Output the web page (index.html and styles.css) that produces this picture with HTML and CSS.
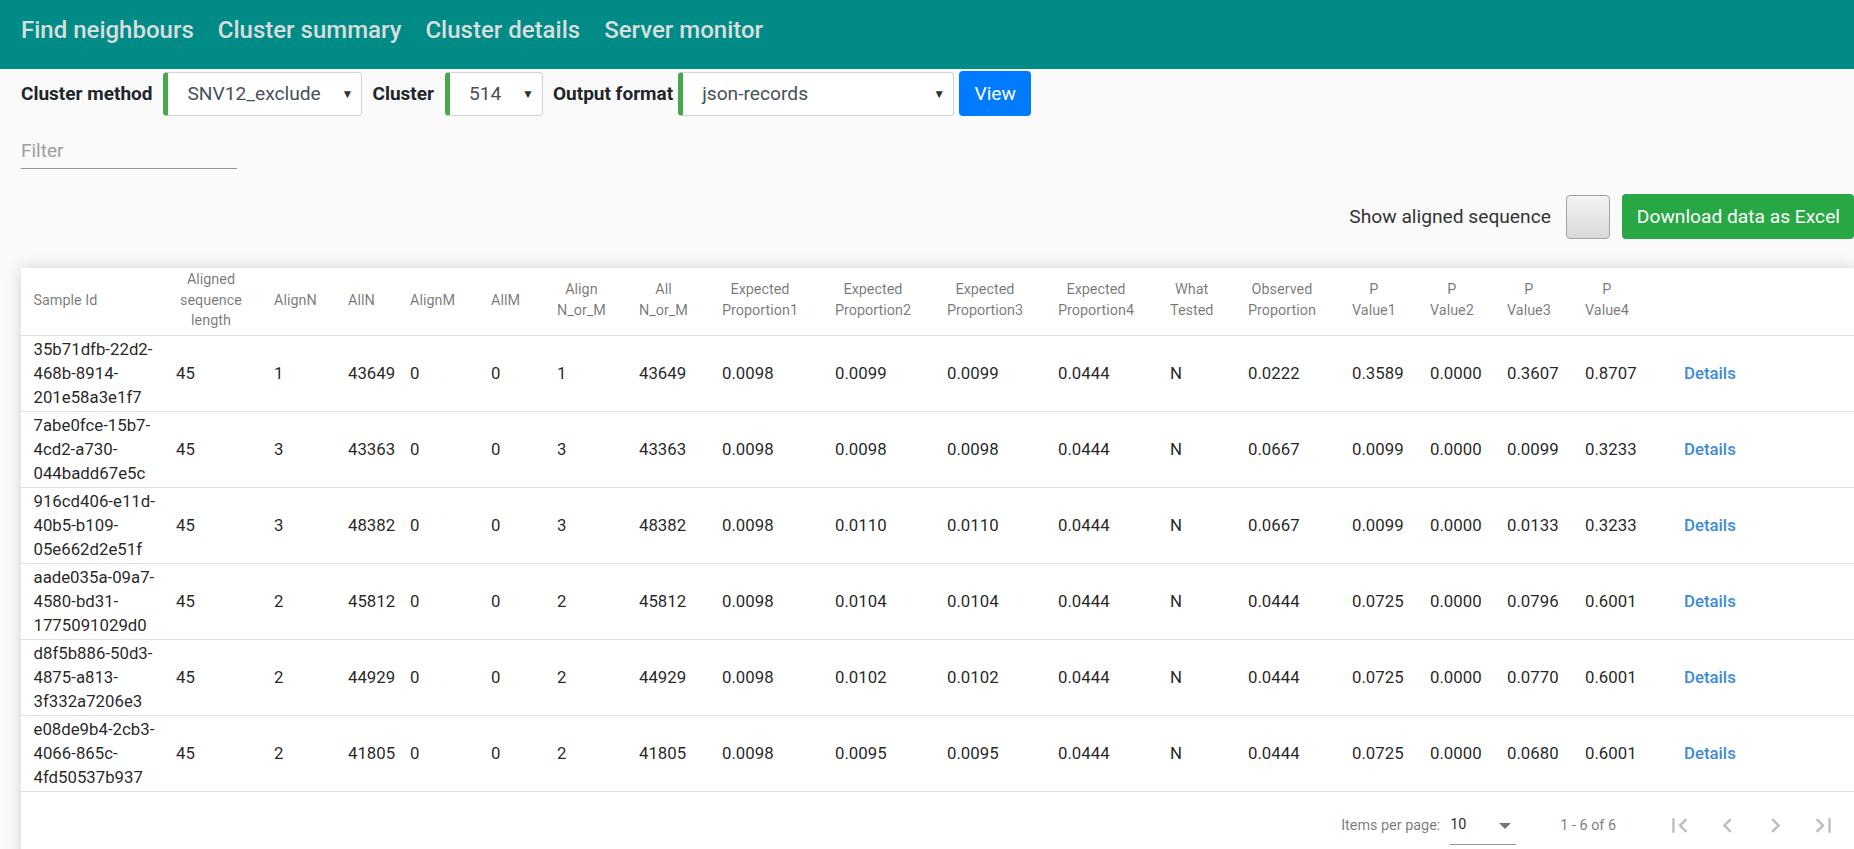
FILE: index.html
```html
<!DOCTYPE html>
<html lang="en">
<head>
<meta charset="utf-8">
<title>Cluster details</title>
<link rel="stylesheet" href="styles.css">
</head>
<body>
<header class="topnav">
  <a href="#">Find neighbours</a>
  <a href="#">Cluster summary</a>
  <a href="#">Cluster details</a>
  <a href="#">Server monitor</a>
</header>
<main class="content">
  <div class="controls">
    <span class="lbl">Cluster method</span>
    <div class="sel sel-method"><span>SNV12_exclude</span><span class="caret">&#9660;</span></div>
    <span class="lbl">Cluster</span>
    <div class="sel sel-cluster"><span>514</span><span class="caret">&#9660;</span></div>
    <span class="lbl lbl-tight">Output format</span>
    <div class="sel sel-format"><span>json-records</span><span class="caret">&#9660;</span></div>
    <button class="btn-view">View</button>
  </div>
  <div class="filter"><input class="filter-input" type="text" placeholder="Filter"></div>
  <div class="tools">
    <span class="tools-label">Show aligned sequence</span>
    <span class="check"></span>
    <button class="btn-excel">Download data as Excel</button>
  </div>
  <section class="card">
    <table class="grid">
      <colgroup>
        <col class="c-id"><col class="c-len"><col class="c-an"><col class="c-alln"><col class="c-am"><col class="c-allm">
        <col class="c-anm"><col class="c-allnm"><col class="c-ep1"><col class="c-ep2"><col class="c-ep3"><col class="c-ep4">
        <col class="c-wt"><col class="c-op"><col class="c-p1"><col class="c-p2"><col class="c-p3"><col class="c-p4"><col>
      </colgroup>
      <thead>
        <tr>
          <th class="first">Sample Id</th>
          <th><div class="hd hd-len">Aligned sequence length</div></th>
          <th><div class="hd">AlignN</div></th>
          <th><div class="hd">AllN</div></th>
          <th><div class="hd">AlignM</div></th>
          <th><div class="hd">AllM</div></th>
          <th><div class="hd">Align N_or_M</div></th>
          <th><div class="hd">All N_or_M</div></th>
          <th><div class="hd">Expected Proportion1</div></th>
          <th><div class="hd">Expected Proportion2</div></th>
          <th><div class="hd">Expected Proportion3</div></th>
          <th><div class="hd">Expected Proportion4</div></th>
          <th><div class="hd">What Tested</div></th>
          <th><div class="hd">Observed Proportion</div></th>
          <th><div class="hd">P Value1</div></th>
          <th><div class="hd">P Value2</div></th>
          <th><div class="hd">P Value3</div></th>
          <th><div class="hd">P Value4</div></th>
          <th></th>
        </tr>
      </thead>
      <tbody>
        <tr>
          <td class="first">35b71dfb-<wbr>22d2-<wbr>468b-<wbr>8914-<wbr>201e58a3e1f7</td>
          <td>45</td><td>1</td><td>43649</td><td>0</td><td>0</td><td>1</td><td>43649</td>
          <td>0.0098</td><td>0.0099</td><td>0.0099</td><td>0.0444</td><td>N</td><td>0.0222</td>
          <td>0.3589</td><td>0.0000</td><td>0.3607</td><td>0.8707</td>
          <td><a class="details" href="#">Details</a></td>
        </tr>
        <tr>
          <td class="first">7abe0fce-<wbr>15b7-<wbr>4cd2-<wbr>a730-<wbr>044badd67e5c</td>
          <td>45</td><td>3</td><td>43363</td><td>0</td><td>0</td><td>3</td><td>43363</td>
          <td>0.0098</td><td>0.0098</td><td>0.0098</td><td>0.0444</td><td>N</td><td>0.0667</td>
          <td>0.0099</td><td>0.0000</td><td>0.0099</td><td>0.3233</td>
          <td><a class="details" href="#">Details</a></td>
        </tr>
        <tr>
          <td class="first">916cd406-<wbr>e11d-<wbr>40b5-<wbr>b109-<wbr>05e662d2e51f</td>
          <td>45</td><td>3</td><td>48382</td><td>0</td><td>0</td><td>3</td><td>48382</td>
          <td>0.0098</td><td>0.0110</td><td>0.0110</td><td>0.0444</td><td>N</td><td>0.0667</td>
          <td>0.0099</td><td>0.0000</td><td>0.0133</td><td>0.3233</td>
          <td><a class="details" href="#">Details</a></td>
        </tr>
        <tr>
          <td class="first">aade035a-<wbr>09a7-<wbr>4580-<wbr>bd31-<wbr>1775091029d0</td>
          <td>45</td><td>2</td><td>45812</td><td>0</td><td>0</td><td>2</td><td>45812</td>
          <td>0.0098</td><td>0.0104</td><td>0.0104</td><td>0.0444</td><td>N</td><td>0.0444</td>
          <td>0.0725</td><td>0.0000</td><td>0.0796</td><td>0.6001</td>
          <td><a class="details" href="#">Details</a></td>
        </tr>
        <tr>
          <td class="first">d8f5b886-<wbr>50d3-<wbr>4875-<wbr>a813-<wbr>3f332a7206e3</td>
          <td>45</td><td>2</td><td>44929</td><td>0</td><td>0</td><td>2</td><td>44929</td>
          <td>0.0098</td><td>0.0102</td><td>0.0102</td><td>0.0444</td><td>N</td><td>0.0444</td>
          <td>0.0725</td><td>0.0000</td><td>0.0770</td><td>0.6001</td>
          <td><a class="details" href="#">Details</a></td>
        </tr>
        <tr>
          <td class="first">e08de9b4-<wbr>2cb3-<wbr>4066-<wbr>865c-<wbr>4fd50537b937</td>
          <td>45</td><td>2</td><td>41805</td><td>0</td><td>0</td><td>2</td><td>41805</td>
          <td>0.0098</td><td>0.0095</td><td>0.0095</td><td>0.0444</td><td>N</td><td>0.0444</td>
          <td>0.0725</td><td>0.0000</td><td>0.0680</td><td>0.6001</td>
          <td><a class="details" href="#">Details</a></td>
        </tr>
      </tbody>
    </table>
    <div class="pager">
      <span class="pager-label">Items per page:</span>
      <div class="pager-select"><span class="pager-value">10</span><span class="pager-arrow"></span></div>
      <span class="pager-range">1 - 6 of 6</span>
      <button class="pager-btn" aria-label="First page"><svg viewBox="0 0 24 24"><path d="M18.41 16.59L13.82 12l4.59-4.59L17 6l-6 6 6 6zM6 6h2v12H6z"/></svg></button>
      <button class="pager-btn" aria-label="Previous page"><svg viewBox="0 0 24 24"><path d="M15.41 7.41L14 6l-6 6 6 6 1.41-1.41L10.83 12z"/></svg></button>
      <button class="pager-btn" aria-label="Next page"><svg viewBox="0 0 24 24"><path d="M10 6L8.59 7.41 13.17 12l-4.58 4.59L10 18l6-6z"/></svg></button>
      <button class="pager-btn" aria-label="Last page"><svg viewBox="0 0 24 24"><path d="M5.59 7.41L10.18 12l-4.59 4.59L7 18l6-6-6-6zM16 6h2v12h-2z"/></svg></button>
    </div>
  </section>
</main>
</body>
</html>
```

FILE: styles.css
```css
html, body {
  margin: 0;
  padding: 0;
}

body {
  background: #fafafa;
  font-family: Roboto, "Noto Sans", "Liberation Sans", sans-serif;
  color: #212529;
  overflow-x: hidden;
}

/* top navigation */
.topnav {
  height: 69px;
  box-sizing: border-box;
  background: #008b87;
  padding: 15px 0 0 21px;
  display: flex;
  align-items: flex-start;
  gap: 24px;
}

.topnav a {
  font-size: 24px;
  font-weight: 500;
  line-height: 30px;
  color: #d8dedd;
  text-decoration: none;
}

.content {
  padding-left: 21px;
}

/* control row */
.controls {
  display: flex;
  align-items: center;
  height: 45px;
  margin-top: 2px;
}

.lbl {
  font-size: 19px;
  font-weight: 700;
  color: #212529;
  margin-right: 11px;
}

.lbl-tight {
  margin-right: 5px;
}

.sel {
  height: 44px;
  box-sizing: border-box;
  background: #fff;
  border: 1px solid #ced4da;
  border-left: 5px solid #46a84a;
  border-radius: 4px;
  display: flex;
  align-items: center;
  justify-content: space-between;
  padding: 0 8px 0 19px;
  font-size: 19.2px;
  color: #495057;
  margin-right: 10px;
}

.sel-method { width: 199px; }
.sel-cluster { width: 98px; }
.sel-format { width: 276px; margin-right: 5px; }

.caret {
  font-size: 12px;
  color: #333;
}

.btn-view {
  height: 45px;
  width: 72px;
  border: none;
  border-radius: 4px;
  background: #007bff;
  color: #fff;
  font-family: inherit;
  font-size: 19.2px;
  padding: 0;
}

/* filter */
.filter {
  margin-top: 16px;
  width: 216px;
}

.filter-input {
  display: block;
  width: 100%;
  height: 37px;
  box-sizing: border-box;
  border: none;
  border-bottom: 1px solid #949494;
  background: transparent;
  padding: 0;
  font-family: inherit;
  font-size: 19px;
  color: #333;
  outline: none;
}

.filter-input::placeholder {
  color: #9e9e9e;
}

/* tools row */
.tools {
  display: flex;
  justify-content: flex-end;
  align-items: center;
  height: 45px;
  margin-top: 25px;
}

.tools-label {
  font-size: 19.2px;
  color: #333;
  margin-right: 15px;
}

.check {
  width: 44px;
  height: 44px;
  box-sizing: border-box;
  border: 1px solid #a3a3a3;
  border-radius: 4px;
  background: linear-gradient(#f3f3f3, #dadada);
  margin-right: 12px;
}

.btn-excel {
  height: 45px;
  border: none;
  border-radius: 4px;
  background: #28a745;
  color: #fff;
  font-family: inherit;
  font-size: 19.2px;
  padding: 0 14px 0 15px;
  white-space: nowrap;
}

/* card + table */
.card {
  margin-top: 29px;
  margin-right: -1px;
  background: #fff;
  box-shadow: 0 0 14px rgba(0, 0, 0, 0.17);
}

.grid {
  width: 100%;
  border-collapse: collapse;
  table-layout: fixed;
}

.c-id { width: 155px; }
.c-len { width: 98px; }
.c-an { width: 74px; }
.c-alln { width: 62px; }
.c-am { width: 81px; }
.c-allm { width: 66px; }
.c-anm { width: 82px; }
.c-allnm { width: 83px; }
.c-ep1 { width: 113px; }
.c-ep2 { width: 112px; }
.c-ep3 { width: 111px; }
.c-ep4 { width: 112px; }
.c-wt { width: 78px; }
.c-op { width: 104px; }
.c-p1 { width: 78px; }
.c-p2 { width: 77px; }
.c-p3 { width: 78px; }
.c-p4 { width: 99px; }

.grid th {
  font-size: 14.4px;
  font-weight: 400;
  line-height: 20.5px;
  color: rgba(0, 0, 0, 0.54);
  text-align: left;
  vertical-align: middle;
  padding: 2px 0 3px;
  border-bottom: 1px solid #e0e0e0;
}

.hd {
  display: inline-block;
  width: min-content;
  text-align: center;
}

.hd-len {
  width: 70px;
}

.grid td {
  font-size: 16.8px;
  line-height: 24px;
  color: rgba(0, 0, 0, 0.87);
  vertical-align: middle;
  padding: 1px 0 2px;
  border-bottom: 1px solid #e0e0e0;
}

.grid .first {
  padding-left: 12.5px;
}

.details {
  color: #3d8bd4;
  font-weight: 500;
  text-decoration: none;
}

/* paginator */
.pager {
  display: flex;
  justify-content: flex-end;
  align-items: center;
  height: 67px;
  padding: 0 8px;
  font-size: 14.4px;
  color: rgba(0, 0, 0, 0.54);
}

.pager-label {
  margin-right: 10px;
}

.pager-select {
  width: 66px;
  height: 28px;
  box-sizing: border-box;
  border-bottom: 1px solid #949494;
  display: flex;
  align-items: center;
  justify-content: space-between;
  margin-top: 12px;
  padding-bottom: 10px;
  padding-right: 5px;
}

.pager-value {
  color: rgba(0, 0, 0, 0.87);
  margin-top: -2px;
}

.pager-arrow {
  width: 0;
  height: 0;
  border-left: 6px solid transparent;
  border-right: 6px solid transparent;
  border-top: 6px solid rgba(0, 0, 0, 0.54);
}

.pager-range {
  margin: 0 39px 0 44px;
}

.pager-btn {
  width: 48px;
  height: 48px;
  border: none;
  background: transparent;
  padding: 0;
  display: flex;
  align-items: center;
  justify-content: center;
}

.pager-btn svg {
  width: 29px;
  height: 29px;
  fill: rgba(0, 0, 0, 0.26);
}
```
